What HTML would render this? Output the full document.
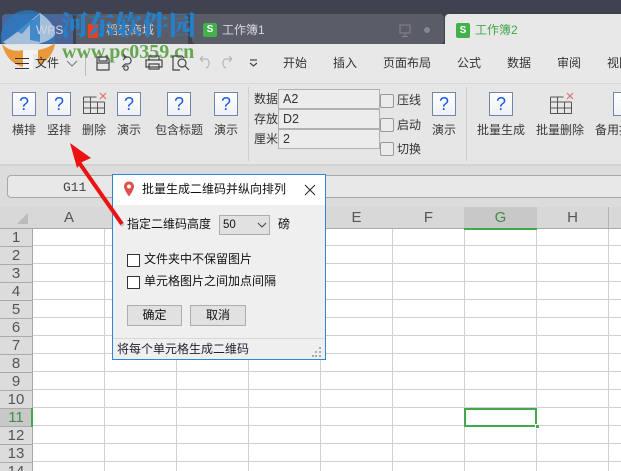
<!DOCTYPE html>
<html><head><meta charset="utf-8">
<style>
html,body{margin:0;padding:0;width:621px;height:471px;overflow:hidden;background:#fff}
body{position:relative;font-family:"Liberation Sans","Noto Sans CJK SC",sans-serif;font-size:12px;color:#333}
.a{position:absolute;white-space:nowrap}
.q{position:absolute;width:22px;height:22px;border:1px solid #7186ad;background:linear-gradient(#fff,#eef1f7);color:#1a5be0;font:18px/22px "Liberation Sans",sans-serif;text-align:center}
.t{position:absolute;white-space:nowrap;font-size:12px;line-height:16px;color:#3a3a3a;text-align:center;transform:translateX(-50%)}
.m{position:absolute;white-space:nowrap;font-size:12px;line-height:16px;color:#333;top:55px}
.cb{position:absolute;width:12px;height:12px;border:1px solid #999;border-radius:2px;background:#ebebeb}
.inp{position:absolute;left:278px;width:100px;height:18px;border:1px solid #b0b0b0;background:#ececec;font-size:12.5px;line-height:18px;color:#333;text-indent:4px}
.row{position:absolute;left:0;width:32px;height:17px;background:#dcdcdc;border-bottom:1px solid #aaa;font-size:15px;line-height:18px;text-align:center;color:#555}
.col{position:absolute;top:207px;height:21px;background:#d8d8d8;font-size:15px;line-height:21px;text-align:center;color:#555}
.dt{position:absolute;white-space:nowrap;font-size:12px;line-height:16px;color:#111}
.dcb{position:absolute;left:127px;width:11px;height:11px;border:1px solid #333;background:#fff}
.btn{position:absolute;top:305px;height:19px;border:1px solid #adadad;background:#e1e1e1;font-size:12px;line-height:19px;text-align:center;color:#111}
</style></head><body>
<!-- title bar -->
<div class="a" style="left:0;top:0;width:621px;height:44px;background:#3f424f"></div>
<div class="a" style="left:2px;top:14px;width:71px;height:30px;background:#4a6599;border-radius:4px 4px 0 0"></div>
<div class="a" style="left:76px;top:14px;width:112px;height:30px;background:#5a5c68;border-radius:4px 4px 0 0"></div>
<div class="a" style="left:192px;top:14px;width:252px;height:30px;background:#5a5c68;border-radius:4px 4px 4px 4px"></div>
<div class="a" style="left:445px;top:14px;width:176px;height:30px;background:#e8e8e8;border-radius:4px 0 0 0"></div>
<div class="a" style="left:88px;top:24px;width:10px;height:14px;background:#e8431f"></div>
<div class="a" style="left:106px;top:22px;font-size:12px;line-height:16px;color:#cfd0d6">稻壳商城</div>
<div class="a" style="left:203px;top:23px;width:14px;height:14px;background:#43b14b;border-radius:2px;color:#fff;font:bold 10px/14px 'Liberation Sans';text-align:center">S</div>
<div class="a" style="left:222px;top:22px;font-size:12px;line-height:16px;color:#d6d7dc">工作簿1</div>
<div class="a" style="left:456px;top:23px;width:14px;height:15px;background:#43b14b;border-radius:2px;color:#fff;font:bold 10px/15px 'Liberation Sans';text-align:center">S</div>
<div class="a" style="left:475px;top:22px;font-size:12px;line-height:16px;color:#43a84a">工作簿2</div>
<svg class="a" style="left:399px;top:24px" width="34" height="14" fill="none"><rect x="1" y="1" width="10" height="8" stroke="#85868f"/><path d="M6 9v3M3 12.500h6" stroke="#85868f"/><circle cx="28" cy="6" r="3" fill="#85868f"/></svg>
<!-- menu bar -->
<div class="a" style="left:0;top:44px;width:621px;height:39px;background:#e8e8e8"></div>
<div class="a" style="left:85px;top:56px;width:1px;height:20px;background:#bbb"></div>
<svg class="a" style="left:66px;top:60px" width="12" height="8" fill="none" stroke="#777"><path d="M1 1l5 5 5-5"/></svg>
<div class="m" style="left:283px">开始</div>
<div class="m" style="left:333px">插入</div>
<div class="m" style="left:383px">页面布局</div>
<div class="m" style="left:457px">公式</div>
<div class="m" style="left:507px">数据</div>
<div class="m" style="left:557px">审阅</div>
<div class="m" style="left:607px">视图</div>
<!-- ribbon -->
<div class="a" style="left:0;top:83px;width:621px;height:80px;background:#e6e6e6;border-bottom:3px solid #d4d4d4;border-top:1px solid #d8d8d8"></div>
<div class="q" style="left:12px;top:92px">?</div><div class="t" style="left:24px;top:122px">横排</div>
<div class="q" style="left:47px;top:92px">?</div><div class="t" style="left:59px;top:122px">竖排</div>
<svg class="a" style="left:82px;top:92px" width="25" height="24" fill="none"><path d="M1.500 5v16.500h21V10M1.500 5h13M1.500 10h21M1.500 16h21M8.500 5v16M15.500 10v11" stroke="#555"/><path d="M18 1l6 6M24 1l-6 6" stroke="#df6f6f" stroke-width="1.200"/></svg>
<div class="t" style="left:94px;top:122px">删除</div>
<div class="q" style="left:117px;top:92px">?</div><div class="t" style="left:129px;top:122px">演示</div>
<div class="q" style="left:167px;top:92px">?</div><div class="t" style="left:179px;top:122px">包含标题</div>
<div class="q" style="left:214px;top:92px">?</div><div class="t" style="left:226px;top:122px">演示</div>
<div class="a" style="left:248px;top:87px;width:1px;height:74px;background:#cfcfcf"></div>
<div class="a" style="left:254px;top:91px;font-size:12px;line-height:16px">数据</div>
<div class="a" style="left:254px;top:111px;font-size:12px;line-height:16px">存放</div>
<div class="a" style="left:254px;top:131px;font-size:12px;line-height:16px">厘米</div>
<div class="inp" style="top:89px">A2</div>
<div class="inp" style="top:109px">D2</div>
<div class="inp" style="top:129px">2</div>
<div class="cb" style="left:380px;top:94px"></div><div class="a" style="left:397px;top:92px;line-height:16px">压线</div>
<div class="cb" style="left:380px;top:118px"></div><div class="a" style="left:397px;top:117px;line-height:16px">启动</div>
<div class="cb" style="left:380px;top:142px"></div><div class="a" style="left:397px;top:141px;line-height:16px">切换</div>
<div class="q" style="left:432px;top:92px">?</div><div class="t" style="left:444px;top:122px">演示</div>
<div class="a" style="left:466px;top:87px;width:1px;height:74px;background:#cfcfcf"></div>
<div class="q" style="left:489px;top:92px">?</div><div class="t" style="left:501px;top:122px">批量生成</div>
<svg class="a" style="left:549px;top:92px" width="25" height="24" fill="none"><path d="M1.500 5v16.500h21V10M1.500 5h13M1.500 10h21M1.500 16h21M8.500 5v16M15.500 10v11" stroke="#555"/><path d="M18 1l6 6M24 1l-6 6" stroke="#df6f6f" stroke-width="1.200"/></svg>
<div class="t" style="left:560px;top:122px">批量删除</div>
<div class="q" style="left:613px;top:92px">?</div><div class="a" style="left:595px;top:122px;line-height:16px;color:#3a3a3a">备用按钮</div>
<!-- formula bar -->
<div class="a" style="left:0;top:166px;width:621px;height:41px;background:#dcdcdc"></div>
<div class="a" style="left:7px;top:175px;width:614px;height:23px;background:#e8e8e8;border:1px solid #a8a8a8;border-right:0;border-radius:4px 0 0 4px;box-sizing:border-box"></div>
<div class="a" style="left:63px;top:180px;font:13px/15px 'Liberation Mono',monospace;color:#444">G11</div>
<!-- grid -->
<svg class="a" style="left:0;top:207px" width="621" height="264">
<defs><pattern id="g" x="33" y="21" width="72" height="18" patternUnits="userSpaceOnUse"><path d="M0 17.500H72M71.500 0V18" stroke="#d0d0d0" fill="none"/></pattern></defs>
<rect x="33" y="21" width="588" height="243" fill="#fff"/>
<rect x="33" y="21" width="588" height="243" fill="url(#g)"/>
</svg>
<div class="a" style="left:0;top:207px;width:621px;height:21px;background:#d8d8d8;border-bottom:1px solid #a8a8a8"></div>
<div class="a" style="left:17px;top:213px;width:0;height:0;border-left:11px solid transparent;border-bottom:11px solid #bbb"></div>
<div class="col" style="left:33px;width:72px">A</div>
<div class="col" style="left:393px;width:71px">F</div>
<div class="col" style="left:464px;width:73px;background:#c8c8c8;color:#3d8f45;border-bottom:2px solid #43a84a;height:21px">G</div>
<div class="col" style="left:537px;width:71px;border-right:1px solid #b5b5b5">H</div>
<div class="col" style="left:321px;width:71px">E</div>
<div class="row" style="top:229px">1</div>
<div class="row" style="top:247px">2</div>
<div class="row" style="top:265px">3</div>
<div class="row" style="top:283px">4</div>
<div class="row" style="top:301px">5</div>
<div class="row" style="top:319px">6</div>
<div class="row" style="top:337px">7</div>
<div class="row" style="top:355px">8</div>
<div class="row" style="top:373px">9</div>
<div class="row" style="top:391px">10</div>
<div class="row" style="top:409px;background:#c8c8c8;color:#3d8f45">11</div>
<div class="row" style="top:427px">12</div>
<div class="row" style="top:445px">13</div>
<div class="row" style="top:463px">14</div>
<div class="a" style="left:0;top:228px;width:33px;height:243px;border-right:1px solid #a8a8a8;box-sizing:border-box;pointer-events:none"></div>
<div class="a" style="left:31px;top:408px;width:2px;height:19px;background:#43a84a"></div>
<div class="a" style="left:464px;top:408px;width:73px;height:19px;border:2px solid #43a84a;box-sizing:border-box"></div>
<div class="a" style="left:535px;top:424px;width:3px;height:3px;background:#43a84a;border:1px solid #fff"></div>
<!-- dialog -->
<div class="a" style="left:112px;top:174px;width:214px;height:186px;background:#efefef;border:1px solid #2a87d8;box-sizing:border-box"></div>
<div class="a" style="left:113px;top:175px;width:212px;height:30px;background:#fff"></div>
<svg class="a" style="left:123px;top:181px" width="12" height="16"><path d="M6 0.500C2.800 0.500 1 3 1 5.500 1 9 6 15.500 6 15.500S11 9 11 5.500C11 3 9.200 0.500 6 0.500z" fill="#e2504c"/><circle cx="6" cy="5.500" r="2" fill="#fff"/></svg>
<div class="dt" style="left:142px;top:181px">批量生成二维码并纵向排列</div>
<svg class="a" style="left:304px;top:184px" width="12" height="12" stroke="#222" fill="none"><path d="M1 1l10 10M11 1L1 11"/></svg>
<div class="dt" style="left:127px;top:216px">指定二维码高度</div>
<div class="a" style="left:219px;top:215px;width:51px;height:20px;background:#e1e1e1;border:1px solid #adadad;box-sizing:border-box;font-size:11.500px;line-height:18px;text-indent:3px;color:#111">50</div>
<svg class="a" style="left:257px;top:222px" width="10" height="6" fill="none" stroke="#444"><path d="M1 1l4 4 4-4"/></svg>
<div class="dt" style="left:278px;top:216px">磅</div>
<div class="dcb" style="top:254px"></div><div class="dt" style="left:144px;top:251px">文件夹中不保留图片</div>
<div class="dcb" style="top:276px"></div><div class="dt" style="left:144px;top:273px">单元格图片之间加点间隔</div>
<div class="btn" style="left:127px;width:53px">确定</div>
<div class="btn" style="left:190px;width:54px">取消</div>
<div class="a" style="left:113px;top:338px;width:212px;height:1px;background:#d8d8d8"></div>
<div class="dt" style="left:117px;top:341px;color:#223">将每个单元格生成二维码</div>
<svg class="a" style="left:311px;top:346px" width="12" height="12" fill="#aaa"><rect x="8" y="1" width="2" height="2"/><rect x="4" y="5" width="2" height="2"/><rect x="8" y="5" width="2" height="2"/><rect x="1" y="9" width="2" height="2"/><rect x="4" y="9" width="2" height="2"/><rect x="8" y="9" width="2" height="2"/></svg>
<!-- arrow -->
<svg class="a" style="left:60px;top:135px" width="70" height="100"><path d="M19 28L63 91" stroke="#999" stroke-width="4" opacity=".45"/><path d="M18 26L62 89" stroke="#ee1111" stroke-width="4"/><path d="M10 8L31 23 22 27 17 33z" fill="#ee1111"/></svg>
<!-- watermark -->
<svg class="a" style="left:0;top:0" width="62" height="72">
<path d="M1 42A27 27 0 1 1 55 33L55 43H1z" fill="#2a7cc4" opacity=".72"/>
<path d="M3 42C16 34 26 24 40 13C50 20 56 28 55 34C54 38 46 42 38 44H20C12 46 6 45 3 42z" fill="#d3dde6" opacity=".72"/>
<path d="M14 30L24 20 34 20 22 34z" fill="#2a7cc4" opacity=".75"/>
<path d="M30 40V22L40 14V42z" fill="#2a7cc4" opacity=".8"/>
<path d="M2 44C8 50 15 52 23 50V67C12 64 5 56 2 44z" fill="#e8993c"/>
<path d="M38 50C44 49 50 47 55 43C54 53 47 62 38 65z" fill="#e8993c"/>
<path d="M23 50H38V54H33V70H23z" fill="#f4f4f4"/>
</svg>
<div class="a" style="left:61px;top:8px;font:900 27px/32px 'Noto Serif CJK SC',serif;color:#2480c8">河东软件园</div>
<div class="a" style="left:62px;top:42px;font:bold 20px/21px 'Liberation Serif',serif;color:#5aa245;opacity:.92">www.pc0359.cn</div>
<div class="a" style="left:36px;top:22px;font-size:12px;line-height:16px;color:#cfd6e6">WPS</div>
<svg class="a" style="left:14px;top:56px" width="16" height="14" stroke="#333" fill="none"><path d="M1 2.500h14M1 7.500h14M1 12.500h14"/></svg>
<div class="m" style="left:35px">文件</div>
<svg class="a" style="left:94px;top:54px" width="170" height="18" fill="none" stroke="#444" stroke-width="1.200">
<path d="M3 3h10l2 2v11H3zM5 3v4h8V3M3 9h12"/>
<path d="M30 3h4c4 0 4 7 0 7h-3M29 0l3 3-3 3M31 10l-3 3"/><circle cx="32" cy="14" r="2.200"/>
<path d="M55 6V2h10v4M52 6h16v7H52zM55 10h10v5H55z"/>
<path d="M79 2h9l2 2M79 2v14h7"/><circle cx="88" cy="9" r="4"/><path d="M91 12l4 4"/>
<path d="M106 5h6c4 0 4 8 0 9M106 5l3-3M106 5l3 3" stroke="#b5b5b5"/>
<path d="M138 5h-6c-4 0-4 8 0 9M138 5l-3-3M138 5l-3 3" stroke="#b5b5b5"/>
<path d="M156 6h7M156 9l3.500 3 3.500-3"/>
</svg>
</body></html>
